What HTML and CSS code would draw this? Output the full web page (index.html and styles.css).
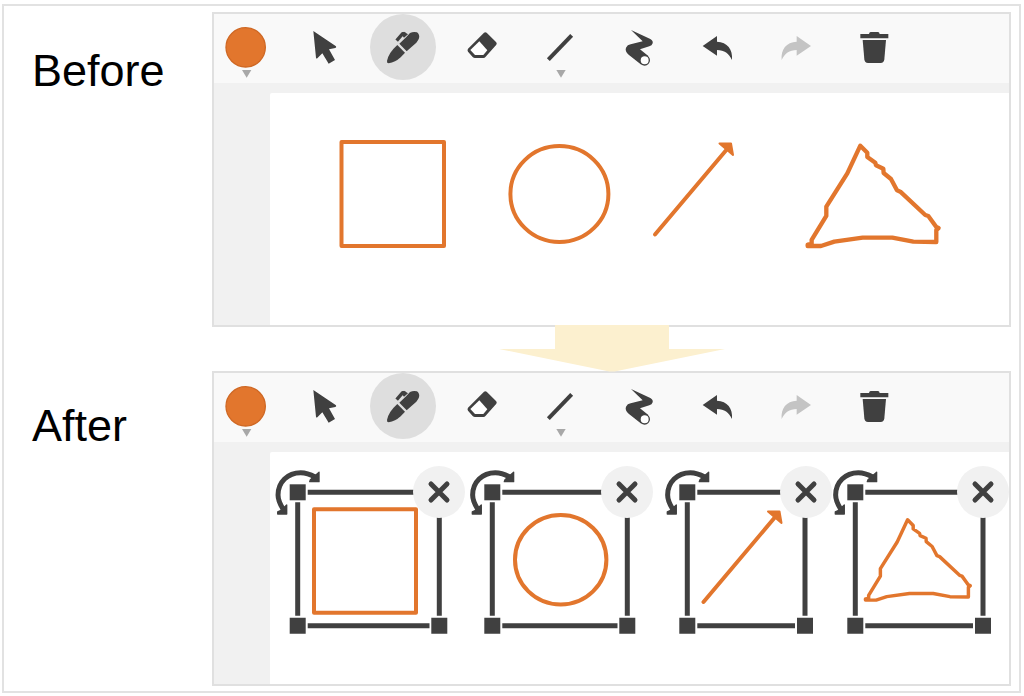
FILE: index.html
```html
<!DOCTYPE html>
<html lang="en">
<head>
<meta charset="utf-8">
<title>Before and After</title>
<link rel="stylesheet" href="styles.css">
</head>
<body>
<svg class="defs" aria-hidden="true">
  <symbol id="i-color" viewBox="0 0 198 198"><circle cx="98" cy="100" r="59" fill="#e2762d" stroke="#cf6824" stroke-width="4"/><path fill="#a8a8a8" d="M87 168h28l-14 23z"/></symbol>
  <symbol id="i-select" viewBox="0 0 198 198"><path d="M64 51 132 97Q134 101 130 102L111 106 129 138 110 149 91 118 76 133Q73 135 72 131Z"/></symbol>
  <symbol id="i-pen" viewBox="0 0 198 198"><g transform="translate(-510 -42)"><path d="M598 131 619 111 630 99Q640 94 651 97 660 104 657 115 655 122 649 128L620 154Z"/><path d="M592 135 615 158 602 172Q586 187 566 190 560 190 561 183 565 159 592 135Z"/><path fill="none" stroke="#404040" stroke-width="10" stroke-linejoin="round" d="M590 122 608 101 617 104"/><path d="M603 103 612 95 624 103 612 113Z"/></g></symbol>
  <symbol id="i-eraser" viewBox="0 0 198 198"><g transform="translate(-25 -42)"><path d="M130 98Q134 95 138 98L166 126Q170 130 167 134L135 170Q132 174 128 174H103Q99 174 96 171L82 155Q79 151 82 146Z"/><path fill="#fff" d="M116 124 89 150 103 165H128L140 151Z"/></g></symbol>
  <symbol id="i-line" viewBox="0 0 198 198"><path stroke="#404040" stroke-width="12" d="M64 137 134 64"/><path fill="#a8a8a8" d="M88 168h28l-14 23z"/></symbol>
  <symbol id="i-smooth" viewBox="0 0 198 198"><g transform="translate(-496 -42)"><path d="M571 90 629 117Q638 122 636 130 634 137 626 139L598 148 623 168 602 194 564 164Q552 153 556 143 560 134 570 133L606 124Z"/><circle cx="612" cy="181" r="14" fill="#fff" stroke="#404040" stroke-width="4"/></g></symbol>
  <symbol id="i-undo" viewBox="0 0 198 198"><path transform="translate(-12 -42)" d="M68 138 111 108V125C142 126 159 148 156 180 147 160 133 151 111 150V167Z"/></symbol>
  <symbol id="i-redo" viewBox="0 0 198 198"><path fill="#c4c4c4" transform="translate(-247 -42)" d="M391 138 348 108V125C317 126 300 148 303 180 312 160 326 151 348 150V167Z"/></symbol>
  <symbol id="i-trash" viewBox="0 0 198 198"><g transform="translate(-483 -42)"><path d="M541 102H567Q568 96 572 96H594Q598 96 599 102H625V115H541Z"/><path d="M548 120H618L613 178Q612 189 602 189H564Q554 189 553 178Z"/></g></symbol>
  <symbol id="i-close" viewBox="0 0 52 52"><path fill="none" stroke="#404040" stroke-width="5" stroke-linecap="round" d="M18 18 34 34M34 18 18 34"/></symbol>
  <g id="rotate" fill="#404040">
    <rect x="-8" y="-8" width="16" height="16"/>
    <g transform="scale(.3333)" stroke="#404040" stroke-linejoin="round">
      <path fill="none" stroke-width="15" d="M-44 50C-54 34-59 24-59 8-59-31-30-59 9-59 25-59 38-54 52-46"/>
      <path stroke-width="4" d="M64-60V-32H36L38-38ZM-33 38V65H-60V59L-50 54Z"/>
    </g>
  </g>
  <path id="freehand" d="M661 77 682 98V111L706 128 708 136 730 146 731 159 753 177 771 211 781 215 856 285 865 288 889 321 896 324 889 330V366L820 365 757 353H668L583 365 543 378H503V374L515 372V360L559 288V260L622 160Z"/>
</svg>

<main class="figure">
  <section class="step">
    <h2 class="label">Before</h2>
    <div class="editor">
      <div class="toolbar" role="toolbar" aria-label="Drawing tools">
        <button class="tool" aria-label="Color"><svg><use href="#i-color"/></svg></button>
        <button class="tool" aria-label="Select"><svg><use href="#i-select"/></svg></button>
        <button class="tool active" aria-label="Pen"><svg><use href="#i-pen"/></svg></button>
        <button class="tool" aria-label="Eraser"><svg><use href="#i-eraser"/></svg></button>
        <button class="tool" aria-label="Line"><svg><use href="#i-line"/></svg></button>
        <button class="tool" aria-label="Smooth stroke"><svg><use href="#i-smooth"/></svg></button>
        <button class="tool" aria-label="Undo"><svg><use href="#i-undo"/></svg></button>
        <button class="tool" aria-label="Redo"><svg><use href="#i-redo"/></svg></button>
        <button class="tool" aria-label="Delete"><svg><use href="#i-trash"/></svg></button>
      </div>
      <div class="desk">
        <div class="paper">
          <svg class="drawing" viewBox="270 93 739 232" role="img" aria-label="Square, circle, arrow and triangle">
            <g class="ink">
              <rect x="341.5" y="142" width="102.5" height="104"/>
              <ellipse cx="559.4" cy="194" rx="49" ry="48"/>
              <path d="M655 234.500 728 148"/>
              <path class="tip" d="M719.500 143.500H731L733 155Z"/>
              <use href="#freehand" transform="translate(640 120) scale(.3333)" stroke-width="13"/>
            </g>
          </svg>
        </div>
      </div>
    </div>
  </section>

  <div class="transition">
    <svg class="arrow" viewBox="0 0 226 47" aria-hidden="true"><path fill="#fcf0cf" d="M56 0H170V24H226L118 46Q113 47 108 46L0 24H56Z"/></svg>
  </div>

  <section class="step">
    <h2 class="label label-after">After</h2>
    <div class="editor">
      <div class="toolbar" role="toolbar" aria-label="Drawing tools">
        <button class="tool" aria-label="Color"><svg><use href="#i-color"/></svg></button>
        <button class="tool" aria-label="Select"><svg><use href="#i-select"/></svg></button>
        <button class="tool active" aria-label="Pen"><svg><use href="#i-pen"/></svg></button>
        <button class="tool" aria-label="Eraser"><svg><use href="#i-eraser"/></svg></button>
        <button class="tool" aria-label="Line"><svg><use href="#i-line"/></svg></button>
        <button class="tool" aria-label="Smooth stroke"><svg><use href="#i-smooth"/></svg></button>
        <button class="tool" aria-label="Undo"><svg><use href="#i-undo"/></svg></button>
        <button class="tool" aria-label="Redo"><svg><use href="#i-redo"/></svg></button>
        <button class="tool" aria-label="Delete"><svg><use href="#i-trash"/></svg></button>
      </div>
      <div class="desk">
        <div class="paper">
          <svg class="drawing" viewBox="270 452 739 232" role="img" aria-label="Selected square, circle, arrow and triangle">
            <g class="ink">
              <rect x="314" y="509.300" width="102" height="103.500"/>
              <ellipse cx="560.700" cy="559.700" rx="45.700" ry="44.800"/>
              <path d="M703.500 602 776 516"/>
              <path class="tip" d="M768 511.500H779.500L781.500 523Z"/>
              <use href="#freehand" transform="translate(731.300 499.300) scale(.2667)" stroke-width="13"/>
            </g>
            <g class="frame">
              <path d="M307.700 492.300H430M307.700 625.700H429.500M297.700 502.300V615.700M439.300 510V615.700"/>
              <path d="M502.300 492.300H618M502.300 625.700H617.500M492.300 502.300V615.700M627.300 510V615.700"/>
              <path d="M697.300 492.300H796M697.300 625.700H795M687.300 502.300V615.700M805 510V615.700"/>
              <path d="M865.300 492.300H974M865.300 625.700H973M855.300 502.300V615.700M983 510V615.700"/>
            </g>
            <g fill="#404040">
              <path d="M289.700 617.700h16v16h-16zM431.300 617.700h16v16h-16zM484.300 617.700h16v16h-16zM619.300 617.700h16v16h-16zM679.300 617.700h16v16h-16zM797 617.700h16v16h-16zM847.300 617.700h16v16h-16zM975 617.700h16v16h-16z"/>
              <use href="#rotate" x="297.700" y="492.300"/>
              <use href="#rotate" x="492.300" y="492.300"/>
              <use href="#rotate" x="687.300" y="492.300"/>
              <use href="#rotate" x="855.300" y="492.300"/>
            </g>
          </svg>
          <button class="close close-square" aria-label="Remove square"><svg><use href="#i-close"/></svg></button>
          <button class="close close-circle" aria-label="Remove circle"><svg><use href="#i-close"/></svg></button>
          <button class="close close-arrow" aria-label="Remove arrow"><svg><use href="#i-close"/></svg></button>
          <button class="close close-triangle" aria-label="Remove triangle"><svg><use href="#i-close"/></svg></button>
        </div>
      </div>
    </div>
  </section>
</main>
</body>
</html>
```

FILE: styles.css
```css
* {
  box-sizing: border-box;
}

body {
  margin: 0;
  padding: 4px 3px 3px 2px;
  background: #fff;
  color: #000;
  font-family: "Liberation Sans", Arial, sans-serif;
}

button {
  margin: 0;
  padding: 0;
  border: 0;
  background: none;
}

.defs {
  position: absolute;
  width: 0;
  height: 0;
}

.figure {
  padding: 6px 8px 5px 28px;
  border: 2px solid #e2e2e2;
}

.step,
.transition {
  display: grid;
  grid-template-columns: 180px minmax(0, 1fr);
}

.label {
  margin: 0;
  padding-top: 33px;
  font-size: 45px;
  font-weight: 400;
  line-height: 52px;
}

.label-after {
  padding-top: 29px;
}

.editor {
  border: 2px solid #e0e0e0;
  overflow: hidden;
}

.toolbar {
  display: flex;
  justify-content: space-between;
  padding: 0 103px 3px 0;
  background: #f9f9f9;
}

.tool {
  display: flex;
  justify-content: center;
  align-items: center;
  width: 64px;
  height: 66px;
}

.tool svg {
  flex: none;
  width: 66px;
  height: 66px;
  border-radius: 50%;
  fill: #404040;
}

.active svg {
  background: #dedede;
}

.desk {
  padding: 10px 0 0 56px;
  background: #f1f1f1;
}

.paper {
  position: relative;
  border-top-left-radius: 2px;
  background: #fff;
  overflow: hidden;
}

.drawing {
  display: block;
  width: 739px;
  height: 232px;
}

.ink {
  fill: none;
  stroke: #e2762d;
  stroke-width: 4;
  stroke-linecap: round;
  stroke-linejoin: round;
}

.tip {
  fill: #e2762d;
  stroke-width: 2;
}

.frame {
  fill: none;
  stroke: #404040;
  stroke-width: 5;
}

.close {
  position: absolute;
  top: 14px;
  width: 52px;
  height: 52px;
  border-radius: 50%;
  background: #f1f1f1;
}

.close svg {
  display: block;
  width: 52px;
  height: 52px;
}

.close-square {
  left: 143px;
}

.close-circle {
  left: 331px;
}

.close-arrow {
  left: 510px;
}

.close-triangle {
  left: 687px;
}

.arrow {
  position: relative;
  grid-column: 2;
  justify-self: center;
  width: 226px;
  height: 47px;
  margin: -2px 0 -1px;
}
```
